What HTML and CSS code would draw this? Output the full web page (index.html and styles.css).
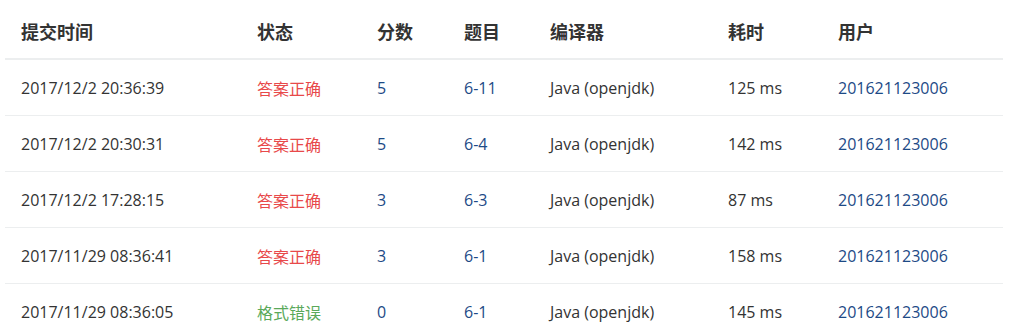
FILE: index.html
```html
<!DOCTYPE html>
<html lang="zh-CN">
<head>
<meta charset="utf-8">
<title>提交列表</title>
<link rel="stylesheet" href="styles.css">
</head>
<body>
<div class="wrap">
<table class="subs">
<thead>
<tr>
<th class="c-time">提交时间</th>
<th class="c-status">状态</th>
<th class="c-score">分数</th>
<th class="c-prob">题目</th>
<th class="c-comp">编译器</th>
<th class="c-cost">耗时</th>
<th class="c-user">用户</th>
</tr>
</thead>
<tbody>
<tr>
<td>2017/12/2 20:36:39</td>
<td class="ok">答案正确</td>
<td><a href="#">5</a></td>
<td><a href="#">6-11</a></td>
<td>Java (openjdk)</td>
<td>125 ms</td>
<td><a href="#">201621123006</a></td>
</tr>
<tr>
<td>2017/12/2 20:30:31</td>
<td class="ok">答案正确</td>
<td><a href="#">5</a></td>
<td><a href="#">6-4</a></td>
<td>Java (openjdk)</td>
<td>142 ms</td>
<td><a href="#">201621123006</a></td>
</tr>
<tr>
<td>2017/12/2 17:28:15</td>
<td class="ok">答案正确</td>
<td><a href="#">3</a></td>
<td><a href="#">6-3</a></td>
<td>Java (openjdk)</td>
<td>87 ms</td>
<td><a href="#">201621123006</a></td>
</tr>
<tr>
<td>2017/11/29 08:36:41</td>
<td class="ok">答案正确</td>
<td><a href="#">3</a></td>
<td><a href="#">6-1</a></td>
<td>Java (openjdk)</td>
<td>158 ms</td>
<td><a href="#">201621123006</a></td>
</tr>
<tr>
<td>2017/11/29 08:36:05</td>
<td class="pe">格式错误</td>
<td><a href="#">0</a></td>
<td><a href="#">6-1</a></td>
<td>Java (openjdk)</td>
<td>145 ms</td>
<td><a href="#">201621123006</a></td>
</tr>
</tbody>
</table>
</div>
</body>
</html>
```
FILE: styles.css
```css
html, body {
  margin: 0;
  padding: 0;
  background: #fff;
}
.wrap {
  padding: 0 7px 0 5px;
}
.subs {
  width: 998px;
  border-collapse: collapse;
  table-layout: fixed;
  font-family: "Open Sans", "Noto Sans CJK SC", sans-serif;
  font-size: 16px;
  color: #333;
}
.subs th {
  text-align: left;
  font-weight: bold;
  font-size: 18px;
  font-family: "Noto Sans CJK SC", sans-serif;
  color: #333;
  height: 59px;
  padding: 3px 16px 0;
  box-sizing: border-box;
  border-bottom: 2px solid #eceeef;
  vertical-align: middle;
}
.subs td {
  height: 56px;
  padding: 1px 16px 0;
  box-sizing: border-box;
  border-bottom: 1px solid #eceeef;
  vertical-align: middle;
  white-space: nowrap;
}
.subs a {
  color: #1d4a86;
  text-decoration: none;
}
.subs td.ok {
  color: #e8494a;
  font-family: "Noto Sans CJK SC", sans-serif;
}
.subs td.pe {
  color: #5aa95a;
  font-family: "Noto Sans CJK SC", sans-serif;
}
.c-time { width: 236px; }
.c-status { width: 120px; }
.c-score { width: 87px; }
.c-prob { width: 86px; }
.c-comp { width: 178px; }
.c-cost { width: 110px; }
```
